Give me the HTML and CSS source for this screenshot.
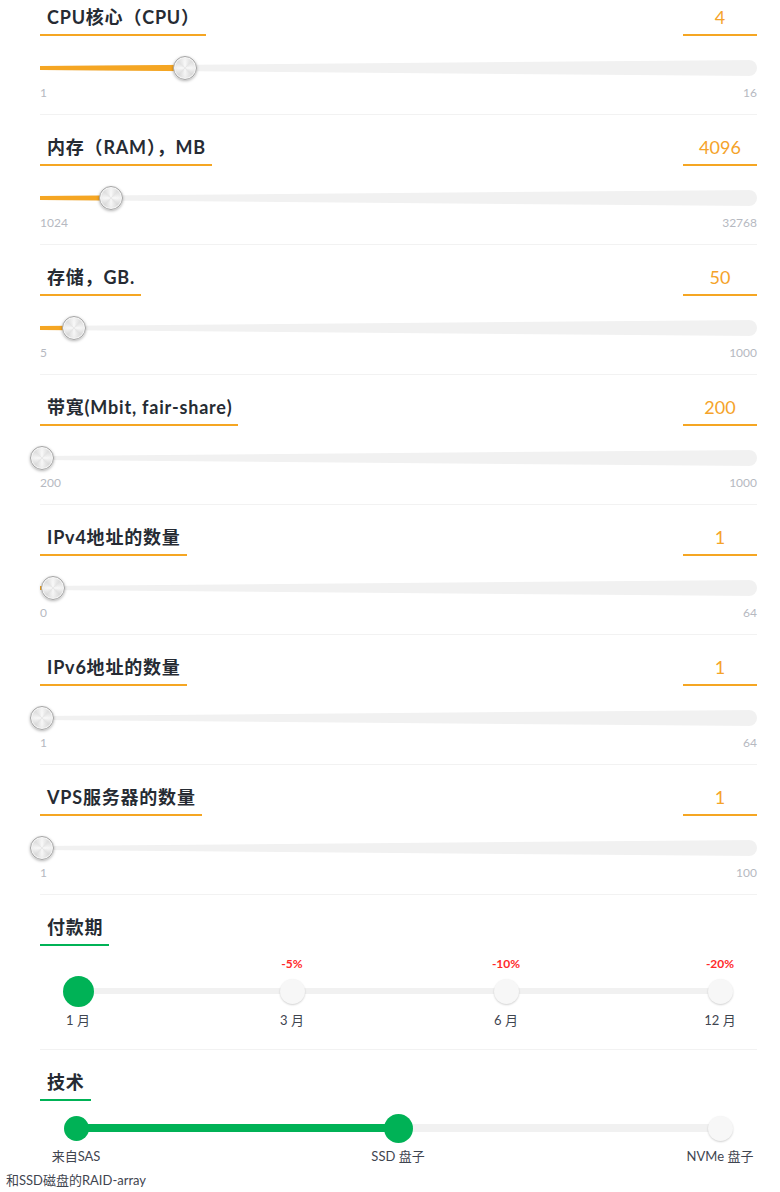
FILE: index.html
```html
<!DOCTYPE html>
<html lang="zh">
<head>
<meta charset="utf-8">
<title>VPS</title>
<link rel="stylesheet" href="styles.css">
</head>
<body>
<div class="page">
  <section class="opt">
    <div class="opt-head">
      <h3 class="opt-title">CPU核心（CPU）</h3>
      <div class="opt-value">4</div>
    </div>
    <div class="range" style="--p:0.2">
      <div class="range-track"><div class="range-fill"></div></div>
      <div class="range-knob"></div>
    </div>
    <div class="range-scale"><span>1</span><span>16</span></div>
  </section>

  <section class="opt">
    <div class="opt-head">
      <h3 class="opt-title">内存（RAM），MB</h3>
      <div class="opt-value">4096</div>
    </div>
    <div class="range" style="--p:0.0968">
      <div class="range-track"><div class="range-fill"></div></div>
      <div class="range-knob"></div>
    </div>
    <div class="range-scale"><span>1024</span><span>32768</span></div>
  </section>

  <section class="opt">
    <div class="opt-head">
      <h3 class="opt-title">存储，GB.</h3>
      <div class="opt-value">50</div>
    </div>
    <div class="range" style="--p:0.0452">
      <div class="range-track"><div class="range-fill"></div></div>
      <div class="range-knob"></div>
    </div>
    <div class="range-scale"><span>5</span><span>1000</span></div>
  </section>

  <section class="opt">
    <div class="opt-head">
      <h3 class="opt-title">带寬(Mbit, fair-share)</h3>
      <div class="opt-value">200</div>
    </div>
    <div class="range" style="--p:0">
      <div class="range-track"><div class="range-fill"></div></div>
      <div class="range-knob"></div>
    </div>
    <div class="range-scale"><span>200</span><span>1000</span></div>
  </section>

  <section class="opt">
    <div class="opt-head">
      <h3 class="opt-title">IPv4地址的数量</h3>
      <div class="opt-value">1</div>
    </div>
    <div class="range" style="--p:0.0156">
      <div class="range-track"><div class="range-fill"></div></div>
      <div class="range-knob"></div>
    </div>
    <div class="range-scale"><span>0</span><span>64</span></div>
  </section>

  <section class="opt">
    <div class="opt-head">
      <h3 class="opt-title">IPv6地址的数量</h3>
      <div class="opt-value">1</div>
    </div>
    <div class="range" style="--p:0">
      <div class="range-track"><div class="range-fill"></div></div>
      <div class="range-knob"></div>
    </div>
    <div class="range-scale"><span>1</span><span>64</span></div>
  </section>

  <section class="opt">
    <div class="opt-head">
      <h3 class="opt-title">VPS服务器的数量</h3>
      <div class="opt-value">1</div>
    </div>
    <div class="range" style="--p:0">
      <div class="range-track"><div class="range-fill"></div></div>
      <div class="range-knob"></div>
    </div>
    <div class="range-scale"><span>1</span><span>100</span></div>
  </section>

  <section class="opt period-opt">
    <div class="opt-head">
      <h3 class="opt-title green">付款期</h3>
    </div>
    <div class="steps period">
      <div class="step">
        <span class="step-off"></span>
        <span class="step-dot on big"></span>
        <span class="step-label">1 月</span>
      </div>
      <div class="step">
        <span class="step-off">-5%</span>
        <span class="step-dot"></span>
        <span class="step-label">3 月</span>
      </div>
      <div class="step">
        <span class="step-off">-10%</span>
        <span class="step-dot"></span>
        <span class="step-label">6 月</span>
      </div>
      <div class="step">
        <span class="step-off">-20%</span>
        <span class="step-dot"></span>
        <span class="step-label">12 月</span>
      </div>
    </div>
  </section>

  <section class="opt last">
    <div class="opt-head">
      <h3 class="opt-title green">技术</h3>
    </div>
    <div class="steps tech">
      <div class="tech-fill"></div>
      <div class="step">
        <span class="step-dot on"></span>
        <span class="step-label">来自SAS<br>和SSD磁盘的RAID-array</span>
      </div>
      <div class="step">
        <span class="step-dot on mid"></span>
        <span class="step-label">SSD 盘子</span>
      </div>
      <div class="step">
        <span class="step-dot"></span>
        <span class="step-label">NVMe 盘子</span>
      </div>
    </div>
  </section>
</div>
</body>
</html>
```

FILE: styles.css
```css
* { box-sizing: border-box; }

html, body {
  margin: 0;
  padding: 0;
  background: #fff;
}

body {
  font-family: "Lato", "Noto Sans CJK SC", sans-serif;
  color: #2a2f37;
}

.page {
  padding: 0 23px 0 40px;
}

.opt {
  padding: 15px 0 14px;
  border-bottom: 1px solid #f2f2f2;
}

.opt:first-child {
  padding-top: 0;
}

.opt.period-opt {
  padding-bottom: 17px;
}

.opt.last {
  border-bottom: none;
}

.opt-head {
  display: flex;
  justify-content: space-between;
  align-items: flex-end;
}

.opt-title {
  margin: 0;
  padding: 5px 6px 5px 7px;
  font-size: 18px;
  line-height: 24px;
  font-weight: 700;
  color: #262b33;
  border-bottom: 2px solid #f5a623;
  letter-spacing: 0.8px;
}

.opt-title.green {
  border-bottom-color: #00b256;
}

.opt-value {
  width: 74px;
  padding: 5px 0;
  text-align: center;
  font-size: 18px;
  line-height: 24px;
  color: #f5a32a;
  border-bottom: 2px solid #f5a623;
}

.range {
  position: relative;
  height: 16px;
  margin-top: 24px;
}

.range-track {
  position: relative;
  height: 16px;
  background: #f1f1f1;
  border-radius: 0 8px 8px 0;
  clip-path: polygon(0 6px, 100% 0, 100% 100%, 0 10px);
  overflow: hidden;
}

.range-fill {
  position: absolute;
  left: 0;
  top: 0;
  bottom: 0;
  width: calc(var(--p) * (100% - 2px) + 2px);
  background: #f5a623;
}

.range-knob {
  position: absolute;
  top: -4px;
  left: calc(var(--p) * (100% - 2px) - 10px);
  width: 24px;
  height: 24px;
  border-radius: 50%;
  border: 1px solid #a6a6a6;
  background:
    conic-gradient(rgba(255,255,255,0.5), rgba(200,200,200,0.35) 12%, rgba(255,255,255,0.5) 25%, rgba(200,200,200,0.35) 37%, rgba(255,255,255,0.5) 50%, rgba(200,200,200,0.35) 62%, rgba(255,255,255,0.5) 75%, rgba(200,200,200,0.35) 87%, rgba(255,255,255,0.5)),
    radial-gradient(circle at 50% 45%, #fbfbfb 0, #ececec 45%, #d2d2d2 85%, #c4c4c4 100%);
  box-shadow: 0 1px 3px rgba(0,0,0,0.3), inset 0 0 0 1px rgba(255,255,255,0.6);
}

.range-scale {
  display: flex;
  justify-content: space-between;
  margin-top: 10px;
  font-size: 12px;
  line-height: 14px;
  color: #b6b9c1;
}

/* step sliders */
.steps {
  position: relative;
  display: flex;
  justify-content: space-between;
}

.steps::before {
  content: "";
  position: absolute;
  left: 30px;
  right: 30px;
  background: #f1f1f1;
}

.period {
  margin: 10px 7px 0 8px;
}

.period::before {
  top: 32px;
  height: 6px;
}

.tech {
  margin: 12px 7px 0 6px;
}

.tech::before {
  top: 11px;
  height: 8px;
}

.tech-fill {
  position: absolute;
  left: 30px;
  width: calc(50% - 30px);
  top: 11px;
  height: 8px;
  background: #00b256;
}

.step {
  position: relative;
  width: 60px;
  display: flex;
  flex-direction: column;
  align-items: center;
}

.step-off {
  display: block;
  height: 16px;
  margin-bottom: 4px;
  font-size: 12px;
  line-height: 16px;
  font-weight: 700;
  color: #ff2b2b;
}

.step-dot {
  display: flex;
  align-items: center;
  justify-content: center;
  height: 30px;
  width: 30px;
  position: relative;
}

.step-dot::after {
  content: "";
  flex: none;
  width: 25px;
  height: 25px;
  border-radius: 50%;
  background: #f7f7f7;
  box-shadow: 0 1px 2px rgba(0,0,0,0.18);
}

.step-dot.on::after {
  background: #00b256;
  box-shadow: none;
}

.step-dot.big::after {
  width: 31px;
  height: 31px;
}

.step-dot.mid::after {
  width: 29px;
  height: 29px;
}

.step-label {
  margin-top: 2px;
  font-size: 13px;
  line-height: 24px;
  color: #3f4550;
  white-space: nowrap;
  text-align: center;
}

.tech .step-label {
  margin-top: 1px;
}
```
